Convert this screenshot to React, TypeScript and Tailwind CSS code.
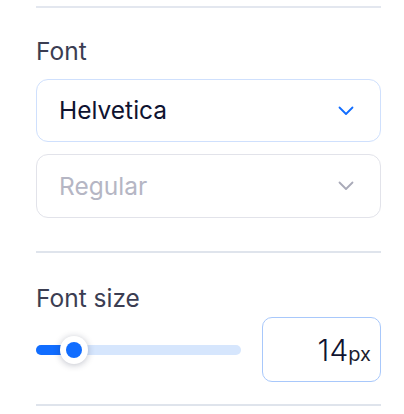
import React from "react";

function Chevron({ color }: { color: string }) {
  return (
    <svg width="16" height="10" viewBox="0 0 16 10" fill="none">
      <path d="M1.5 1.5 L8 8 L14.5 1.5" stroke={color} strokeWidth="1.8" strokeLinecap="round" strokeLinejoin="round" />
    </svg>
  );
}

export default function App() {
  return (
    <div className="w-[404px] h-[414px] bg-white overflow-hidden" style={{ fontFamily: "Inter, 'Noto Sans', sans-serif" }}>
      <div className="ml-[36px] w-[345px] flex flex-col">
        <div className="mt-[6px] h-[2px] bg-[#e3e7ef]" />
        <div className="mt-[27px] text-[24.5px] leading-[32px] text-[#3b3d52]">Font</div>
        <div className="mt-[12px] h-[63px] rounded-[12px] border border-[#cfe0fd] flex items-center justify-between pl-[22px] pr-[26px]">
          <span className="text-[24.5px] text-[#0f1330]">Helvetica</span>
          <Chevron color="#116dff" />
        </div>
        <div className="mt-[12px] h-[64px] rounded-[12px] border border-[#e2e3ea] flex items-center justify-between pl-[22px] pr-[26px]">
          <span className="text-[24.5px] text-[#b5b6c4]">Regular</span>
          <Chevron color="#a9aab8" />
        </div>
        <div className="mt-[33px] h-[2px] bg-[#dfe4ec]" />
        <div className="mt-[29px] text-[24.5px] leading-[32px] text-[#3b3d52]">Font size</div>
        <div className="mt-[3px] flex items-center justify-between">
          <div className="relative w-[205px] h-[10px] rounded-full bg-[#d6e6fd]">
            <div className="absolute left-0 top-0 h-[10px] w-[40px] rounded-full bg-[#116dff]" />
            <div className="absolute left-[24px] top-[-9px] w-[28px] h-[28px] rounded-full bg-white shadow-[0_1px_7px_rgba(20,30,60,0.28)] flex items-center justify-center">
              <div className="w-[16px] h-[16px] rounded-full bg-[#116dff]" />
            </div>
          </div>
          <div className="w-[119px] h-[65px] rounded-[10px] border border-[#a8c8fb] flex items-baseline justify-end pr-[9px] pt-[14px]">
            <span className="text-[30px] leading-[36px] font-light text-[#0f1330]">14</span>
            <span className="text-[20px] text-[#1b1d30]">px</span>
          </div>
        </div>
        <div className="mt-[22px] h-[2px] bg-[#dfe4ec]" />
      </div>
    </div>
  );
}
